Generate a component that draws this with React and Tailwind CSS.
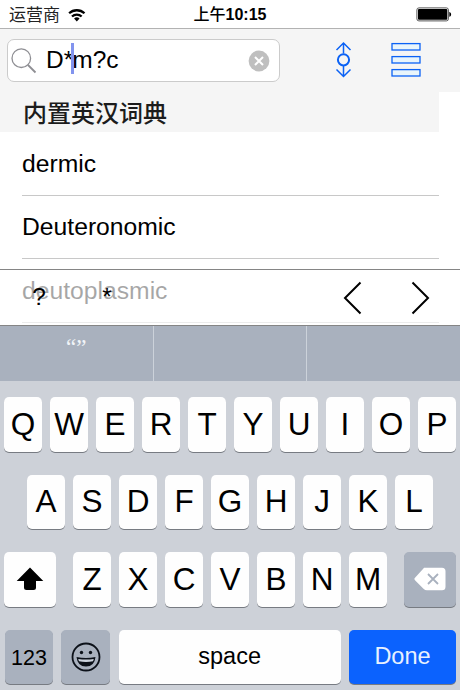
import React from "react";

const words = ["dermic", "Deuteronomic", "deutoplasmic"];

const Key = ({ children, className = "w-[38px] bg-[#fefefe] text-[31.5px]" }) => (
  <button
    className={`flex h-[54.5px] shrink-0 items-center justify-center rounded-[5px] leading-none shadow-[0_1px_0.5px_#777b82] ${className}`}
  >
    {children}
  </button>
);

const Letters = ({ letters }) => letters.split("").map((letter) => <Key key={letter}>{letter}</Key>);

const StatusBar = () => (
  <div className="grid h-[29px] grid-cols-3 items-center border-b border-[#b2b2b2] bg-white">
    <div className="flex items-center gap-[8px] pt-[2px] pl-[9px] text-[17px] leading-none text-[#222]">
      <span>运营商</span>
      <svg width="18" height="14" viewBox="0 0 19 14" fill="none" stroke="#000" strokeWidth="2.4">
        <path d="M1.2 5.2a11.8 11.8 0 0 1 16.2 0M4.2 8.6a7.4 7.4 0 0 1 10.2 0" />
        <path d="M6.4 10.8a4.2 4.2 0 0 1 5.8 0L9.3 13.8z" fill="#000" stroke="none" />
      </svg>
    </div>
    <div className="pt-[2px] text-center text-[16px] leading-none font-bold whitespace-nowrap text-black">
      <span className="font-medium">上午</span>10:15
    </div>
    <div className="flex justify-end pr-[8px]">
      <svg width="36" height="15" viewBox="0 0 36 15">
        <rect x="0.9" y="0.9" width="31.5" height="13" rx="2" fill="#fff" stroke="#555" strokeWidth="1" />
        <rect x="2" y="2" width="29.3" height="10.8" rx="1" fill="#000" />
        <path d="M33.3 5c2.4.5 2.4 4.3 0 4.8z" fill="#000" />
      </svg>
    </div>
  </div>
);

const SearchHeader = () => (
  <div className="flex h-[63px] items-start bg-[#f5f5f5] pt-[10px] pl-[7px]">
    <div className="flex h-[43px] w-[273px] items-center rounded-[7px] border border-[#cbcbcb] bg-white pr-[9px] pl-[3px]">
      <svg width="26" height="26" viewBox="0 0 26 26" fill="none" stroke="#8e8e93" strokeWidth="1.3">
        <circle cx="10.3" cy="10.2" r="9.3" />
        <path d="M17 17l7.5 7.5" strokeWidth="1.8" />
      </svg>
      <div className="ml-[9px] flex flex-1 items-center text-[24.5px] leading-none text-black">
        <span>D*</span>
        <span className="relative -top-[2px] -mr-[2px] -ml-[2px] h-[31px] w-[3px] bg-[#8294ee]" />
        <span>m?c</span>
      </div>
      <svg width="22" height="22" viewBox="0 0 22 22">
        <circle cx="11" cy="11" r="10.4" fill="#bfbfbf" />
        <path d="M7 7l8 8M15 7l-8 8" stroke="#fff" strokeWidth="2" />
      </svg>
    </div>
    <svg className="mt-[2px] ml-[55px]" width="17" height="38" viewBox="0 0 17 38" fill="none" stroke="#0b62f5" strokeWidth="1.5">
      <path d="M8.5 12.5V2M1.5 9l7-7 7 7M8.5 25v10.5M1.5 28.5l7 7 7-7" />
      <circle cx="8.5" cy="18.8" r="5.6" strokeWidth="2" />
    </svg>
    <svg className="mt-[3px] ml-[38px]" width="32" height="36" viewBox="0 0 32 36" fill="#e9f5fb" stroke="#0b62f5" strokeWidth="1.3">
      <rect x="2" y="1.6" width="28" height="6.4" />
      <rect x="2" y="14.6" width="28" height="6.4" />
      <rect x="2" y="27.6" width="28" height="6.4" />
    </svg>
  </div>
);

const WordList = () => (
  <div className="h-[233px] overflow-hidden bg-white">
    <h2 className="flex h-[40px] w-[439px] items-center bg-[#f5f5f5] pt-[3px] pl-[23px] text-[24px] leading-none font-medium text-[#1c1c1c]">
      内置英汉词典
    </h2>
    <ul className="ml-[22px] w-[417px]">
      {words.map((word) => (
        <li
          key={word}
          className="flex h-[63.5px] items-center border-b border-[#c8c8c8] pt-[2px] text-[24.7px] leading-none text-black"
        >
          {word}
        </li>
      ))}
    </ul>
  </div>
);

// Translucent bar with wildcard shortcuts, it lies over the end of the list
const WildcardBar = () => (
  <div className="absolute inset-x-0 top-[269px] flex h-[57px] items-center border-y border-[#858585] bg-white/65 text-black">
    <button className="ml-[32px] w-[14px] text-[24.5px] leading-none">?</button>
    <button className="ml-[55px] w-[12px] text-[24.5px] leading-none">*</button>
    <svg className="ml-[229px]" width="20" height="34" viewBox="0 0 20 34" fill="none" stroke="#000" strokeWidth="2">
      <path d="M18.5 1.5L3 17l15.5 15.5" />
    </svg>
    <svg className="ml-[49px]" width="20" height="34" viewBox="0 0 20 34" fill="none" stroke="#000" strokeWidth="2">
      <path d="M1.5 1.5L17 17 1.5 32.5" />
    </svg>
  </div>
);

const Suggestions = () => (
  <div className="grid h-[56px] grid-cols-[153.5px_153.5px_1fr] divide-x divide-[#ccd2da] bg-[#a9b1be]">
    <div className="flex justify-center pt-[11px] font-['Liberation_Serif',serif] text-[23px] leading-none text-[#f1f4f8]">
      “”
    </div>
    <div />
    <div />
  </div>
);

const Keyboard = () => (
  <div className="flex h-[309px] flex-col gap-[23px] bg-[#cdd1d8] pt-[16px] text-black">
    <div className="flex justify-center gap-2">
      <Letters letters="QWERTYUIOP" />
    </div>
    <div className="flex justify-center gap-2">
      <Letters letters="ASDFGHJKL" />
    </div>
    <div className="flex justify-between px-1">
      <Key className="w-[52px] bg-[#fefefe]">
        <svg width="28" height="24" viewBox="0 0 28 24">
          <path d="M14 0.5L27.3 14H20v6.5q0 2.5-2.5 2.5h-7Q8 23 8 20.5V14H0.7z" />
        </svg>
      </Key>
      <div className="flex gap-2">
        <Letters letters="ZXCVBNM" />
      </div>
      <Key className="w-[52px] bg-[#a9b1be]">
        <svg width="32" height="24" viewBox="0 0 32 24">
          <path d="M10 .7h18q3.5 0 3.5 3.5v15.6q0 3.5-3.5 3.5H13q-2 0-3.5-1.5L1 13.2q-1.2-1.200 0-2.4L9 2z" fill="#fff" />
          <path d="M14 7l10 10M24 7L14 17" stroke="#a9b1be" strokeWidth="1.8" />
        </svg>
      </Key>
    </div>
    <div className="flex justify-between pr-1 pl-[5px]">
      <Key className="w-[48px] bg-[#a9b1be] pt-[3px] text-[21.5px]">123</Key>
      <Key className="w-[49px] bg-[#a9b1be]">
        <svg width="30" height="30" viewBox="0 0 30 30">
          <circle cx="15" cy="15" r="13.5" fill="none" stroke="#0c1119" strokeWidth="1.8" />
          <circle cx="10.5" cy="10.5" r="1.7" fill="#0c1119" />
          <circle cx="19.5" cy="10.5" r="1.7" fill="#0c1119" />
          <path d="M5.5 15q9.5 2 19 0-1 9.5-9.5 9.5T5.5 15z" fill="#0c1119" />
          <path d="M7.2 16.9q7.8 1.4 15.6 0l-.8 2.3q-7 1.6-14 0z" fill="#cdd4de" />
        </svg>
      </Key>
      <Key className="w-[222px] bg-[#fefefe] text-[23.5px]">space</Key>
      <Key className="w-[107px] bg-[#0b62fe] text-[23.5px] text-[#e8f1ff]">Done</Key>
    </div>
  </div>
);

const App = () => {
  return (
    <div className="relative h-[690px] w-[460px] overflow-hidden bg-white font-['Liberation_Sans','Noto_Sans_CJK_SC',sans-serif]">
      <StatusBar />
      <SearchHeader />
      <WordList />
      <Suggestions />
      <Keyboard />
      <WildcardBar />
    </div>
  );
};

export default App;
